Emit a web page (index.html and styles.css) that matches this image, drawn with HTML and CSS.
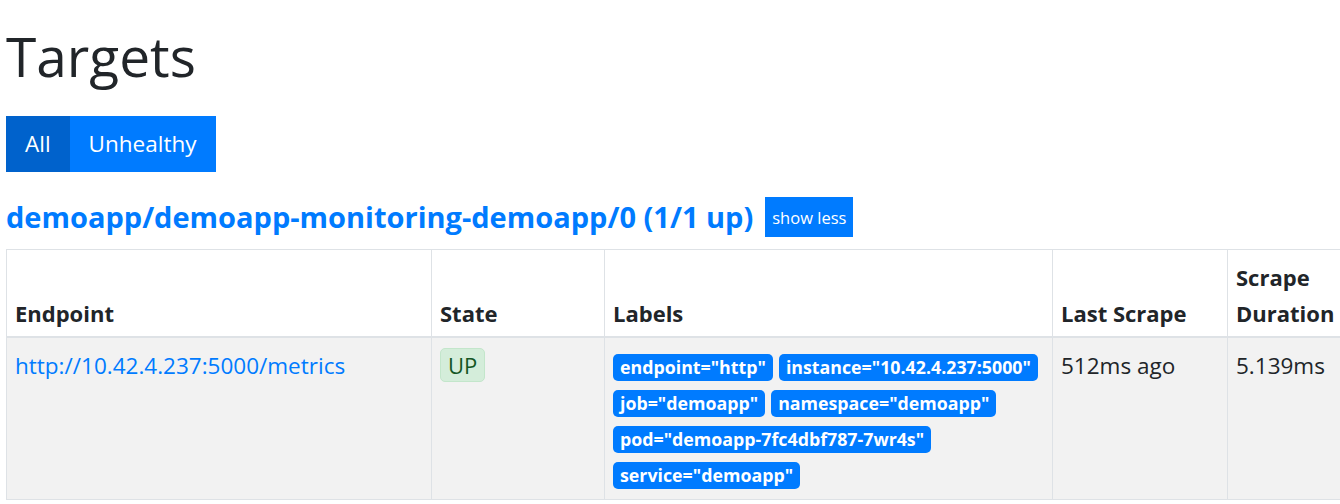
FILE: index.html
```html
<!DOCTYPE html>
<html lang="en">
<head>
<meta charset="utf-8">
<title>Targets</title>
<link rel="stylesheet" href="styles.css">
</head>
<body>
<div class="page">
  <h1 class="page-title">Targets</h1>
  <div class="filter-group">
    <button class="filter-btn active">All</button><button class="filter-btn">Unhealthy</button>
  </div>
  <div class="pool">
    <h3 class="pool-title"><a class="pool-link" href="#demoapp">demoapp/demoapp-monitoring-demoapp/0 (1/1 up)</a><button class="toggle-btn">show less</button></h3>
    <div class="table-wrap">
      <table class="targets">
        <colgroup>
          <col class="col-endpoint">
          <col class="col-state">
          <col class="col-labels">
          <col class="col-last">
          <col class="col-duration">
        </colgroup>
        <thead>
          <tr>
            <th>Endpoint</th>
            <th>State</th>
            <th>Labels</th>
            <th>Last Scrape</th>
            <th>Scrape Duration</th>
          </tr>
        </thead>
        <tbody>
          <tr>
            <td><a class="endpoint-link" href="#">http://10.42.4.237:5000/metrics</a></td>
            <td><span class="state-badge">UP</span></td>
            <td class="labels-cell"><span class="label-badge">endpoint="http"</span><span class="label-badge">instance="10.42.4.237:5000"</span><span class="label-badge">job="demoapp"</span><span class="label-badge">namespace="demoapp"</span><span class="label-badge">pod="demoapp-7fc4dbf787-7wr4s"</span><span class="label-badge">service="demoapp"</span></td>
            <td>512ms ago</td>
            <td>5.139ms</td>
          </tr>
        </tbody>
      </table>
    </div>
  </div>
</div>
</body>
</html>
```

FILE: styles.css
```css
html, body {
  margin: 0;
  padding: 0;
  background: #fff;
  overflow: hidden;
}

body {
  font-family: "Open Sans", "Noto Sans", sans-serif;
  font-size: 22.5px;
  line-height: 36px;
  color: #212529;
}

.page {
  padding: 0 0 0 6px;
}

.page-title {
  margin: 0;
  padding-top: 20px;
  font-size: 55px;
  font-weight: 400;
  line-height: 72px;
  color: #212529;
}

.filter-group {
  display: flex;
  margin-top: 24px;
}

.filter-btn {
  font-family: inherit;
  font-size: 22.5px;
  line-height: 36px;
  height: 56px;
  padding: 0 19px;
  border: 0;
  color: #fff;
  background: #007bff;
  border-radius: 0;
}

.filter-btn.active {
  background: #0062cc;
}

.pool-title {
  display: flex;
  align-items: center;
  margin: 25px 0 12px 0;
  font-size: 29px;
  font-weight: 700;
  line-height: 40px;
}

.pool-link {
  color: #007bff;
  text-decoration: none;
}

.toggle-btn {
  margin-left: 12px;
  height: 40px;
  padding: 0 7px;
  border: 0;
  border-radius: 0;
  background: #007bff;
  color: #fff;
  font-family: inherit;
  font-size: 16.5px;
  font-weight: 400;
}

.table-wrap {
  overflow: hidden;
}

.targets {
  border-collapse: collapse;
  table-layout: fixed;
  width: 1337px;
}

.col-endpoint { width: 425px; }
.col-state { width: 173px; }
.col-labels { width: 448px; }
.col-last { width: 175px; }
.col-duration { width: 116px; }

.targets th,
.targets td {
  border: 1px solid #dee2e6;
  padding: 7px 8px;
  text-align: left;
}

.targets th {
  vertical-align: bottom;
  font-size: 22px;
  font-weight: 700;
  border-bottom-width: 2px;
  padding-top: 9px;
  padding-bottom: 5px;
}

.targets td {
  vertical-align: top;
  background: #f2f2f2;
  padding-top: 10px;
}

.endpoint-link {
  color: #007bff;
  text-decoration: none;
}

.state-badge {
  display: inline-block;
  padding: 4px 7px;
  line-height: 24px;
  font-size: 22px;
  color: #155724;
  background: #d4edda;
  border: 1px solid #c3e6cb;
  border-radius: 5px;
}

.labels-cell {
  line-height: 36px;
}

.label-badge {
  display: inline-block;
  margin-right: 6px;
  padding: 4px 7px;
  font-size: 17.8px;
  font-weight: 700;
  line-height: 19px;
  color: #fff;
  background: #007bff;
  border-radius: 5px;
  vertical-align: middle;
}
```
